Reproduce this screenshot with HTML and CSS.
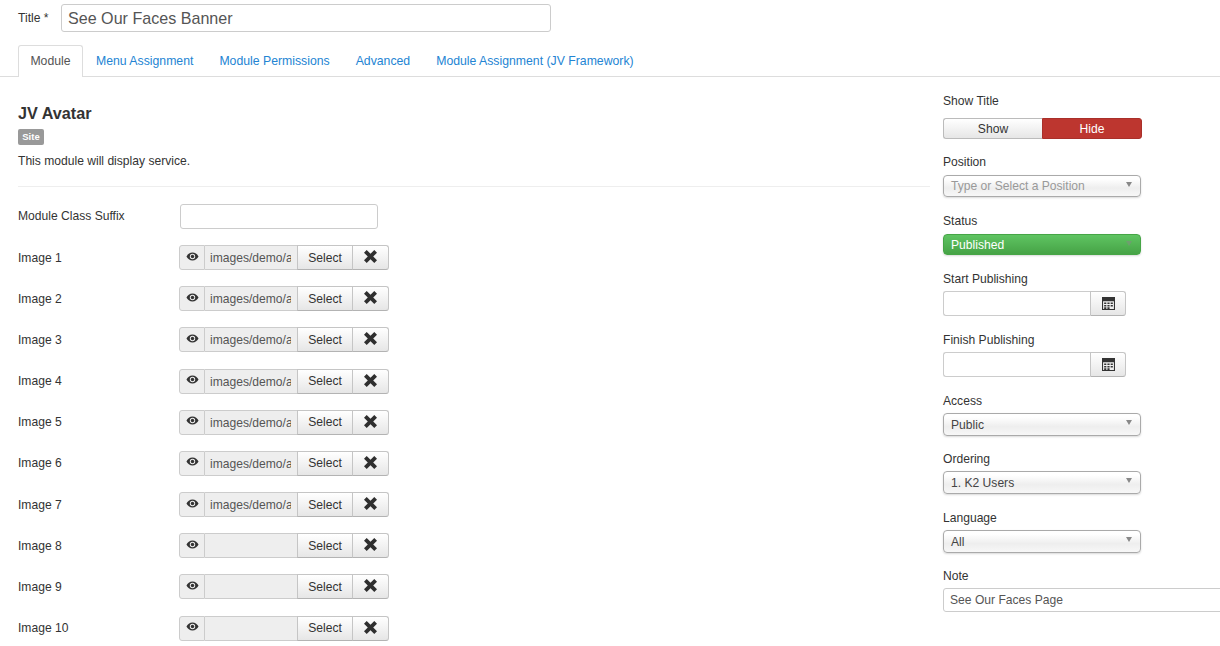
FILE: index.html
```html
<!DOCTYPE html>
<html lang="en">
<head>
<meta charset="utf-8">
<title>See Our Faces Banner</title>
<link rel="stylesheet" href="styles.css">
</head>
<body>
<svg class="defs" width="0" height="0" aria-hidden="true">
  <defs>
    <symbol id="eye" viewBox="0 0 14 10"><path fill-rule="evenodd" d="M7 .6C3.900.6 1.500 2.600.3 5c1.200 2.400 3.600 4.400 6.700 4.400s5.500-2 6.700-4.400C12.500 2.600 10.100.6 7 .6zM7 2a3 3 0 1 1 0 6 3 3 0 0 1 0-6z"/><circle cx="7" cy="5" r="1.900"/></symbol>
    <symbol id="cross" viewBox="0 0 12 12"><path d="M2.500 0 6 3.500 9.500 0 12 2.500 8.500 6l3.500 3.500L9.500 12 6 8.500 2.500 12 0 9.500 3.500 6 0 2.500z"/></symbol>
    <symbol id="cal" viewBox="0 0 12 12"><path fill-rule="evenodd" d="M0 0h12v12H0zM1 4v7h10V4z"/><path d="M2 5h2v1.500H2zM5 5h2v1.500H5zM8 5h2v1.500H8zM2 7.300h2v1.500H2zM5 7.300h2v1.500H5zM8 7.300h2v1.500H8zM2 9.500h2V11H2zM5 9.500h2V11H5z"/></symbol>
  </defs>
</svg>

<div class="title-row">
  <label class="title-label">Title *</label>
  <div class="input title-input">See Our Faces Banner</div>
</div>

<ul class="tabs">
  <li class="tab active">Module</li>
  <li class="tab">Menu Assignment</li>
  <li class="tab">Module Permissions</li>
  <li class="tab">Advanced</li>
  <li class="tab">Module Assignment (JV Framework)</li>
</ul>

<div class="layout">
  <main class="main">
    <h2 class="heading">JV Avatar</h2>
    <span class="badge">Site</span>
    <p class="desc">This module will display service.</p>
    <hr class="rule">

    <div class="row suffix-row">
      <label class="row-label suffix-label">Module Class Suffix</label>
      <div class="input suffix-input"></div>
    </div>

    <div class="row"><label class="row-label">Image 1</label><div class="group"><span class="addon"><svg class="eye"><use href="#eye"/></svg></span><span class="path"><span class="path-text">images/demo/a</span></span><span class="btn select">Select</span><span class="btn clear"><svg class="cross"><use href="#cross"/></svg></span></div></div>
    <div class="row"><label class="row-label">Image 2</label><div class="group"><span class="addon"><svg class="eye"><use href="#eye"/></svg></span><span class="path"><span class="path-text">images/demo/a</span></span><span class="btn select">Select</span><span class="btn clear"><svg class="cross"><use href="#cross"/></svg></span></div></div>
    <div class="row"><label class="row-label">Image 3</label><div class="group"><span class="addon"><svg class="eye"><use href="#eye"/></svg></span><span class="path"><span class="path-text">images/demo/a</span></span><span class="btn select">Select</span><span class="btn clear"><svg class="cross"><use href="#cross"/></svg></span></div></div>
    <div class="row"><label class="row-label">Image 4</label><div class="group"><span class="addon"><svg class="eye"><use href="#eye"/></svg></span><span class="path"><span class="path-text">images/demo/a</span></span><span class="btn select">Select</span><span class="btn clear"><svg class="cross"><use href="#cross"/></svg></span></div></div>
    <div class="row"><label class="row-label">Image 5</label><div class="group"><span class="addon"><svg class="eye"><use href="#eye"/></svg></span><span class="path"><span class="path-text">images/demo/a</span></span><span class="btn select">Select</span><span class="btn clear"><svg class="cross"><use href="#cross"/></svg></span></div></div>
    <div class="row"><label class="row-label">Image 6</label><div class="group"><span class="addon"><svg class="eye"><use href="#eye"/></svg></span><span class="path"><span class="path-text">images/demo/a</span></span><span class="btn select">Select</span><span class="btn clear"><svg class="cross"><use href="#cross"/></svg></span></div></div>
    <div class="row"><label class="row-label">Image 7</label><div class="group"><span class="addon"><svg class="eye"><use href="#eye"/></svg></span><span class="path"><span class="path-text">images/demo/a</span></span><span class="btn select">Select</span><span class="btn clear"><svg class="cross"><use href="#cross"/></svg></span></div></div>
    <div class="row"><label class="row-label">Image 8</label><div class="group"><span class="addon"><svg class="eye"><use href="#eye"/></svg></span><span class="path"></span><span class="btn select">Select</span><span class="btn clear"><svg class="cross"><use href="#cross"/></svg></span></div></div>
    <div class="row"><label class="row-label">Image 9</label><div class="group"><span class="addon"><svg class="eye"><use href="#eye"/></svg></span><span class="path"></span><span class="btn select">Select</span><span class="btn clear"><svg class="cross"><use href="#cross"/></svg></span></div></div>
    <div class="row"><label class="row-label">Image 10</label><div class="group"><span class="addon"><svg class="eye"><use href="#eye"/></svg></span><span class="path"></span><span class="btn select">Select</span><span class="btn clear"><svg class="cross"><use href="#cross"/></svg></span></div></div>
  </main>

  <aside class="side">
    <div class="field">
      <label class="side-label label-wide">Show Title</label>
      <div class="toggle"><span class="toggle-show">Show</span><span class="toggle-hide">Hide</span></div>
    </div>
    <div class="field field-loose">
      <label class="side-label">Position</label>
      <div class="chosen chosen-22 placeholder">Type or Select a Position<i class="caret"></i></div>
    </div>
    <div class="field">
      <label class="side-label">Status</label>
      <div class="chosen chosen-21 published">Published<i class="caret"></i></div>
    </div>
    <div class="field">
      <label class="side-label label-low">Start Publishing</label>
      <div class="date"><div class="date-input"></div><span class="date-btn"><svg class="cal"><use href="#cal"/></svg></span></div>
    </div>
    <div class="field">
      <label class="side-label label-low">Finish Publishing</label>
      <div class="date"><div class="date-input"></div><span class="date-btn"><svg class="cal"><use href="#cal"/></svg></span></div>
    </div>
    <div class="field field-tight">
      <label class="side-label label-low">Access</label>
      <div class="chosen chosen-23">Public<i class="caret"></i></div>
    </div>
    <div class="field">
      <label class="side-label label-low">Ordering</label>
      <div class="chosen chosen-23">1. K2 Users<i class="caret"></i></div>
    </div>
    <div class="field field-tight">
      <label class="side-label label-low">Language</label>
      <div class="chosen chosen-23">All<i class="caret"></i></div>
    </div>
    <div class="field">
      <label class="side-label label-low">Note</label>
      <div class="input note-input">See Our Faces Page</div>
    </div>
  </aside>
</div>
</body>
</html>
```
FILE: styles.css
```css
* { box-sizing: border-box; }
html, body { margin: 0; padding: 0; }
body {
  width: 1220px;
  height: 646px;
  overflow: hidden;
  background: #fff;
  color: #333;
  font-family: "Liberation Sans", Arial, sans-serif;
  font-size: 12.1px;
  line-height: 18px;
}
.defs { display: block; height: 0; }

.input {
  border: 1px solid #ccc;
  border-radius: 3px;
  background: #fff;
  color: #555;
}

.title-row {
  display: flex;
  align-items: flex-start;
  padding: 4px 0 0 18px;
  height: 45px;
}
.title-label { width: 43px; padding-top: 5px; }
.title-input {
  width: 490px;
  height: 28px;
  padding: 0 6px;
  font-size: 16.1px;
  line-height: 27px;
}

.tabs {
  display: flex;
  margin: 0;
  padding: 0 0 0 18px;
  height: 32px;
  list-style: none;
  border-bottom: 1px solid #ddd;
  font-size: 12.25px;
}
.tab {
  height: 32px;
  padding: 6px 12px 0;
  color: #2384d3;
  border: 1px solid transparent;
  border-bottom: 0;
  white-space: nowrap;
}
.active {
  width: 65px;
  padding: 6px 0 0;
  text-align: center;
  color: #555;
  background: #fff;
  border-color: #ddd;
  border-radius: 3px 3px 0 0;
}

.layout { display: flex; gap: 13px; padding-left: 18px; }
.main { width: 912px; flex: none; padding-top: 26px; }

.heading {
  margin: 0;
  font-size: 16.2px;
  line-height: 20px;
  font-weight: bold;
}
.badge {
  display: block;
  width: 26px;
  height: 16px;
  margin-top: 6px;
  background: #999;
  color: #fff;
  border-radius: 2px;
  font-size: 9.5px;
  font-weight: bold;
  line-height: 15px;
  text-align: center;
}
.desc { margin: 7px 0 0; }
.rule {
  height: 1px;
  margin: 16px 0 0;
  border: 0;
  background: #eee;
}

.row {
  display: flex;
  align-items: center;
  height: 25px;
  margin-top: 16.18px;
}
.suffix-row { margin-top: 17px; margin-bottom: -0.1px; }
.row-label { width: 161px; flex: none; }
.suffix-label { padding-bottom: 2px; }
.suffix-input { width: 198px; height: 25px; margin-left: 1px; }

.group { display: flex; width: 210px; height: 25px; }
.addon, .path {
  display: block;
  height: 25px;
  background: #eee;
  border: 1px solid #ccc;
}
.addon {
  display: flex;
  align-items: center;
  justify-content: center;
  width: 26px;
  flex: none;
  border-radius: 3px 0 0 3px;
  padding-bottom: 3px;
}
.path {
  width: 92px;
  flex: none;
  border-left: 0;
  border-right: 0;
  padding: 0 5px;
  line-height: 24px;
  color: #555;
}
.path-text {
  display: block;
  width: 81px;
  overflow: hidden;
  white-space: nowrap;
}
.btn {
  display: flex;
  align-items: center;
  justify-content: center;
  height: 25px;
  border: 1px solid #c5c5c5;
  border-bottom-color: #b3b3b3;
  background: linear-gradient(#fff, #e6e6e6);
  color: #333;
}
.select { width: 56px; }
.clear { width: 36px; border-left: 0; border-radius: 0 3px 3px 0; padding-bottom: 2px; }
.eye { width: 13px; height: 9px; fill: #333; }
.cross { width: 13px; height: 13px; fill: #2f2f2f; }

.side { flex: 1; min-width: 0; padding-top: 15px; white-space: nowrap; }
.field { margin-bottom: 14px; }
.field-loose { margin-bottom: 15px; }
.field-tight { margin-bottom: 13px; }
.side-label { display: block; height: 18px; margin-bottom: 4px; }
.label-wide { margin-bottom: 8px; }
.label-low { padding-top: 1px; }

.toggle { display: flex; width: 199px; height: 21px; line-height: 20px; text-align: center; }
.toggle-show {
  width: 99px;
  border: 1px solid #bbb;
  border-right: 0;
  border-radius: 3px 0 0 3px;
  background: linear-gradient(#fff, #e6e6e6);
}
.toggle-hide {
  width: 100px;
  border: 1px solid #a9302a;
  border-radius: 0 3px 3px 0;
  background: #bd362f;
  color: #fff;
}

.chosen {
  position: relative;
  width: 198px;
  padding: 0 7px;
  border: 1px solid #aaa;
  border-radius: 4px;
  background: linear-gradient(#fff 15%, #eee 60%, #f7f7f7);
  color: #444;
  box-shadow: 0 1px 2px rgba(0, 0, 0, .15);
}
.chosen-21 { height: 21px; line-height: 20px; }
.chosen-22 { height: 22px; line-height: 21px; }
.chosen-23 { height: 23px; line-height: 22px; }
.placeholder { color: #999; }
.published {
  border-color: #46a546;
  background: linear-gradient(#5fc462, #46a346);
  color: #fff;
}
.caret {
  position: absolute;
  top: 6px;
  right: 8px;
  border-style: solid;
  border-width: 5px 3.5px 0;
  border-color: #888 transparent transparent;
}
.published .caret { border-top-color: #6f9f6f; }

.date { display: flex; width: 183px; height: 25px; }
.date-input {
  width: 147px;
  border: 1px solid #ccc;
  border-right: 0;
  border-radius: 3px 0 0 3px;
}
.date-btn {
  display: flex;
  align-items: center;
  justify-content: center;
  width: 36px;
  border: 1px solid #c5c5c5;
  border-bottom-color: #b3b3b3;
  border-radius: 0 3px 3px 0;
  background: linear-gradient(#fff, #e6e6e6);
  padding-bottom: 1px;
}
.cal { width: 13px; height: 13px; fill: #333; }

.note-input {
  width: 300px;
  height: 24px;
  padding: 0 6px;
  line-height: 22px;
}
```
